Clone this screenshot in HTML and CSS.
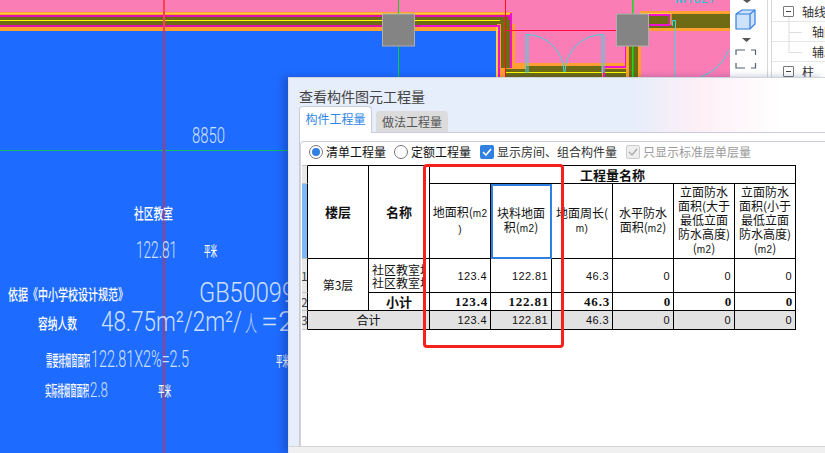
FILE: index.html
```html
<!DOCTYPE html>
<html lang="zh">
<head>
<meta charset="utf-8">
<title>查看构件图元工程量</title>
<link rel="stylesheet" href="styles.css">
</head>
<body>
<div class="app">
  <svg class="drawing" width="730" height="453" viewBox="0 0 730 453">
    <rect width="730" height="453" fill="#fa7db5"/>
    <rect y="30" width="498" height="423" fill="#1e6bff"/>
    <!-- top wall -->
    <rect y="12" width="512" height="19" fill="#ffa030"/>
    <rect y="13" width="510" height="1" fill="#ffd040"/>
    <rect y="15" width="512" height="12" fill="#e010b0"/>
    <rect y="17" width="508" height="8" fill="#6e6b14"/>
    <rect y="20" width="500" height="1" fill="#ffff00"/>
    <!-- right leg of the wall -->
    <rect x="497" y="24" width="18" height="53" fill="#ffa030"/>
    <rect x="501" y="20" width="10" height="48" fill="#6e6b14"/>
    <rect x="496" y="25" width="2" height="52" fill="#ffd040"/>
    <path d="M420 26H499V77" fill="none" stroke="#f010d0" stroke-width="2"/>
    <path d="M510 14H511V67H525V77" fill="none" stroke="#f010d0" stroke-width="2"/>
    <!-- bottom wall under doors -->
    <rect x="512" y="63" width="116" height="14" fill="#ffa030"/>
    <rect x="526" y="66" width="76" height="11" fill="#6e6b14"/>
    <rect x="505" y="69" width="21" height="8" fill="#6e6b14"/>
    <rect x="604" y="69" width="23" height="8" fill="#6e6b14"/>
    <rect x="505" y="72" width="125" height="1" fill="#ffff00"/>
    <path d="M604 77V67H626V46" fill="none" stroke="#f010d0" stroke-width="2"/>
    <rect x="627" y="46" width="13" height="31" fill="#6e6b14"/>
    <rect x="626" y="46" width="3" height="31" fill="#ffa030"/>
    <rect x="638" y="46" width="3" height="31" fill="#ffa030"/>
    <!-- right wall -->
    <rect x="640" y="11" width="90" height="20" fill="#ffa030"/>
    <rect x="640" y="14" width="90" height="14" fill="#6e6b14"/>
    <path d="M640 15H670V25H640" fill="none" stroke="#f010d0" stroke-width="2"/>
    <path d="M640 13.500H671V25" fill="none" stroke="#ffd040" stroke-width="1"/>
    <!-- doors -->
    <g fill="none" stroke="#40d8e0" stroke-width="1">
      <path d="M526 34.500V73M528 34.500V73M526 34.500A38 38 0 0 1 564 72"/>
      <path d="M602 34.500V73M604 34.500V73M603 34.500A38 38 0 0 0 565 72"/>
      <path d="M672.500 20.500H675.500V77M672.500 20.500V26"/>
      <path d="M729 50A50 50 0 0 1 701 77"/>
    </g>
    <text class="cyan-label" x="675" y="3" textLength="40" lengthAdjust="spacingAndGlyphs">M1021</text>
    <!-- axes -->
    <rect x="398" width="1" height="77" fill="#10d020"/>
    <rect x="632" width="1.500" height="77" fill="#10e020"/>
    <rect y="150" width="288" height="1" fill="#10c060"/>
    <rect x="505" width="1" height="77" fill="#ff1020"/>
    <rect x="505" y="30" width="112" height="1" fill="#ff1040"/>
    <rect x="163" y="0" width="2" height="31" fill="#ff4050"/>
    <rect x="163" y="31" width="2" height="422" fill="#a83c78"/>
    <!-- columns -->
    <rect class="column" x="382.500" y="14" width="32" height="32"/>
    <rect class="column" x="616.500" y="14" width="32" height="32"/>
    <!-- annotation text -->
    <text class="thin" font-size="22" x="192" y="143" textLength="33" lengthAdjust="spacingAndGlyphs">8850</text>
    <text class="note" font-size="15" x="134" y="219" textLength="39" lengthAdjust="spacingAndGlyphs">社区教室</text>
    <text class="thin" font-size="23" x="136" y="258" textLength="41" lengthAdjust="spacingAndGlyphs">122.81</text>
    <text class="note" font-size="14" x="204" y="256" textLength="13" lengthAdjust="spacingAndGlyphs">平米</text>
    <text class="note" font-size="15" x="8" y="300" textLength="120" lengthAdjust="spacingAndGlyphs">依据《中小学校设计规范》</text>
    <text class="thin" font-size="28" x="199" y="302" textLength="96" lengthAdjust="spacingAndGlyphs">GB50099</text>
    <text class="note" font-size="15" x="38" y="329" textLength="39" lengthAdjust="spacingAndGlyphs">容纳人数</text>
    <text class="thin" font-size="28" x="101" y="331" textLength="141" lengthAdjust="spacingAndGlyphs">48.75m²/2m²/</text>
    <text class="thin" font-size="22" x="245" y="331" textLength="12" lengthAdjust="spacingAndGlyphs">人</text>
    <text class="thin" font-size="28" x="261" y="331" textLength="34" lengthAdjust="spacingAndGlyphs">=2</text>
    <text class="note" font-size="15" x="46" y="366" textLength="44" lengthAdjust="spacingAndGlyphs">需要排烟窗面积</text>
    <text class="thin" font-size="23" x="91" y="367" textLength="98" lengthAdjust="spacingAndGlyphs">122.81X2%=2.5</text>
    <text class="note" font-size="14" x="276" y="366" textLength="13" lengthAdjust="spacingAndGlyphs">平米</text>
    <text class="note" font-size="15" x="45" y="396" textLength="44" lengthAdjust="spacingAndGlyphs">实际排烟窗面积</text>
    <text class="thin" font-size="20" x="90" y="397" textLength="18" lengthAdjust="spacingAndGlyphs">2.8</text>
    <text class="note" font-size="14" x="158" y="396" textLength="13" lengthAdjust="spacingAndGlyphs">平米</text>
  </svg>

  <div class="toolbar">
    <svg class="tool-svg" width="37" height="77" viewBox="0 0 37 77">
      <path d="M13 0H21L17 3Z" fill="#555"/>
      <path d="M6 14L12 10H25V24L20 29H6Z" fill="#cfe2fb" stroke="#2f80e0" stroke-width="1.200"/>
      <path d="M6 14H20V29M20 14L25 10" fill="none" stroke="#2f80e0" stroke-width="1.200"/>
      <path d="M12 38H21L16.500 42Z" fill="#555"/>
      <path d="M6 55V50H15M21 50H25.500V55M25.500 63V68H21M15 68H6V63" fill="none" stroke="#556070" stroke-width="1.200"/>
    </svg>
  </div>

  <div class="tree">
    <svg class="tree-lines" width="30" height="60" viewBox="0 0 30 60">
      <path d="M17 17V52.500H36M17 32.500H36" fill="none" stroke="#ddd"/>
    </svg>
    <div class="tree-row"><span class="minus"></span><span class="tree-label">轴线</span></div>
    <div class="tree-row tree-child"><span class="tree-label">轴网</span></div>
    <div class="tree-row tree-child"><span class="tree-label">辅助轴线</span></div>
    <div class="tree-row"><span class="minus"></span><span class="tree-label">柱</span></div>
  </div>
</div>

<section class="dialog">
  <h1 class="dialog-title">查看构件图元工程量</h1>
  <div class="tabs">
    <div class="tab tab-active">构件工程量</div>
    <div class="tab">做法工程量</div>
  </div>
  <div class="panel">
    <div class="inner">
      <div class="options">
        <label class="option opt-radio1"><span class="radio radio-on"></span>清单工程量</label>
        <label class="option opt-radio2"><span class="radio"></span>定额工程量</label>
        <label class="option opt-check1"><span class="check"><svg width="14" height="14" viewBox="0 0 14 14"><path d="M3 7L6 10L11 4" fill="none" stroke="#fff" stroke-width="1.600"/></svg></span>显示房间、组合构件量</label>
        <label class="option option-off"><span class="check check-off"><svg width="14" height="14" viewBox="0 0 14 14"><path d="M3 7L6 10L11 4" fill="none" stroke="#aaa" stroke-width="1.400"/></svg></span>只显示标准层单层量</label>
      </div>
      <table class="grid">
        <colgroup>
          <col class="c-head"><col class="c"><col class="c"><col class="c"><col class="c"><col class="c"><col class="c"><col class="c"><col class="c">
        </colgroup>
        <tbody>
          <tr class="r-top">
            <td class="rowhead"></td>
            <th rowspan="2" class="bold13">楼层</th>
            <th rowspan="2" class="bold13">名称</th>
            <th colspan="6" class="bold13">工程量名称</th>
          </tr>
          <tr class="r-head">
            <td class="rowhead rowhead-sel"></td>
            <th class="hd">地面积(<span class="lat">m2</span><br><span class="lat">)</span></th>
            <th class="hd sel">块料地面<br>积(<span class="lat">m2</span>)</th>
            <th class="hd">地面周长(<br><span class="lat">m)</span></th>
            <th class="hd">水平防水<br>面积(<span class="lat">m2</span>)</th>
            <th class="hd">立面防水<br>面积(大于<br>最低立面<br>防水高度)<br>(<span class="lat">m2</span>)</th>
            <th class="hd">立面防水<br>面积(小于<br>最低立面<br>防水高度)<br>(<span class="lat">m2</span>)</th>
          </tr>
          <tr class="r-data">
            <td class="rowhead">1</td>
            <td rowspan="2" class="center">第3层</td>
            <td class="name"><div class="clip">社区教室地面<br>社区教室块料</div></td>
            <td class="num">123.4</td><td class="num">122.81</td><td class="num">46.3</td><td class="num">0</td><td class="num">0</td><td class="num">0</td>
          </tr>
          <tr class="r-sub">
            <td class="rowhead">2</td>
            <td class="center bold13">小计</td>
            <td class="num b">123.4</td><td class="num b">122.81</td><td class="num b">46.3</td><td class="num b">0</td><td class="num b">0</td><td class="num b">0</td>
          </tr>
          <tr class="r-total">
            <td class="rowhead">3</td>
            <td colspan="2" class="center">合计</td>
            <td class="num">123.4</td><td class="num">122.81</td><td class="num">46.3</td><td class="num">0</td><td class="num">0</td><td class="num">0</td>
          </tr>
        </tbody>
      </table>
    </div>
  </div>
  <div class="dialog-foot"></div>
</section>
<div class="redmark"></div>
</body>
</html>
```

FILE: styles.css
```css
* { box-sizing: border-box; }
html, body { margin: 0; padding: 0; }
body {
  width: 825px;
  height: 453px;
  overflow: hidden;
  position: relative;
  background: #fff;
  font-family: "Noto Sans CJK SC", "Noto Sans", sans-serif;
  color: #111;
}
.app { display: flex; width: 825px; height: 453px; }
.drawing { display: block; flex: 0 0 730px; }
.thin {
  font-family: "Roboto", "Noto Sans CJK SC", sans-serif;
  font-weight: 300;
  fill: #cfe0ff;
}
.note {
  font-family: "Noto Sans CJK SC", sans-serif;
  font-weight: 500;
  fill: #fff;
}
.cyan-label { font-family: "Roboto", sans-serif; font-size: 13px; fill: #20c8d8; }
.column { fill: #848484; stroke: #aeaeae; stroke-width: 1; }

.toolbar { flex: 0 0 37px; background: #fff; border-right: 1px solid #d8d8d8; }
.tool-svg { display: block; }
.tree { flex: 1; position: relative; border-left: 1px solid #d8d8d8; margin-left: 3px; font-size: 12px; padding-top: 2px; }
.tree-lines { position: absolute; left: 0; top: 0; }
.tree-row { display: flex; align-items: center; height: 20px; padding-left: 11px; border-bottom: 1px solid #e6e6e6; }
.tree-child { padding-left: 40px; }
.tree-label { white-space: nowrap; color: #333; }
.minus {
  width: 11px; height: 11px; margin-right: 8px;
  border: 1px solid #777; border-radius: 1px; background: #fff;
  display: flex; align-items: center; justify-content: center;
  position: relative;
}
.minus::after { content: ""; width: 5px; height: 1px; background: #444; }

.dialog {
  position: absolute;
  left: 288px; top: 77px; right: 0; bottom: 0;
  padding: 9px 0 0 10px;
  display: flex;
  flex-direction: column;
  border-top: 1px solid #cfd3dc;
  border-left: 1px solid #dbe0ec;
  background: linear-gradient(90deg, #e6edfb 0%, #e6eefb 64%, #fdeff6 76%, #ffffff 92%);
  box-shadow: -5px 0 7px rgba(10, 30, 90, .28);
}
.dialog-title { margin: 0; font-size: 14px; line-height: 18px; font-weight: 400; color: #444; }
.tabs { display: flex; gap: 4px; align-items: flex-end; height: 27px; position: relative; z-index: 1; }
.tab {
  width: 72px; height: 21px;
  font-size: 12px; line-height: 21px; text-align: center;
  color: #555; background: #dcdcdc;
  border-radius: 4px 4px 0 0;
}
.tab-active {
  width: 73px;
  height: 27px; line-height: 24px; margin-bottom: -1px;
  color: #2f86e6; background: #fff;
  border: 1px solid #c9ccd6; border-bottom: 0;
}
.panel {
  flex: 1;
  background: #fff;
  border-top: 1px solid #c9ccd6;
  border-left: 1px solid #c9ccd6;
  padding: 8px 0 0 0;
  min-height: 0;
}
.inner {
  height: 100%;
  border-top: 1px solid #c9ccd6;
  border-left: 1px solid #d4d4d8;
  border-top-left-radius: 4px;
}
.options { display: flex; align-items: center; height: 23px; font-size: 12px; padding: 0 0 4px 8px; }
.option { display: flex; align-items: center; white-space: nowrap; color: #111; }
.opt-radio1 { width: 85px; }
.opt-radio2 { width: 86px; }
.opt-check1 { width: 146px; color: #333; }
.option-off { color: #9a9a9a; }
.radio { width: 14px; height: 14px; margin-right: 3px; border-radius: 50%; border: 1px solid #777; background: #fff; position: relative; flex: none; }
.radio-on::after { content: ""; position: absolute; left: 2px; top: 2px; width: 8px; height: 8px; border-radius: 50%; background: #2f80e0; }
.check { width: 14px; height: 14px; margin-right: 3px; border-radius: 2px; background: #2f80e0; flex: none; display: block; }
.check svg { display: block; }
.check-off { background: #eee; border: 1px solid #ccc; }
.check-off svg { margin: -1px; }

.grid {
  table-layout: fixed;
  border-collapse: separate;
  border-spacing: 0;
  width: 494px;
  margin-left: 1px;
  font-size: 12px;
  line-height: 14px;
  color: #111;
}
.c-head { width: 6px; }
.c { width: 61px; }
.grid th, .grid td {
  padding: 0;
  border-right: 1px solid #000;
  border-bottom: 1px solid #000;
  overflow: hidden;
}
.r-top th { border-top: 1px solid #000; }
.r-top { height: 19px; }
.r-head { height: 75px; }
.r-data { height: 34px; }
.r-sub { height: 18px; }
.r-total { height: 19px; }
.grid th { font-weight: 400; text-align: center; }
.grid th.bold13, .grid td.bold13 { font-weight: 700; font-size: 13px; }
.hd { line-height: 14px; }
.lat { font-family: "Liberation Sans", sans-serif; font-size: 10px; letter-spacing: .3px; }
.grid .rowhead {
  background: #e8e8e8;
  border-right: 1px solid #000;
  border-bottom: 1px solid #c4c4c4;
  font-size: 12px;
  text-align: left;
  color: #444;
  white-space: nowrap;
  text-indent: -1px;
}
.r-top .rowhead { border-top: 1px solid #c4c4c4; }
.grid .rowhead-sel { background: #7fb8f8; }
.grid .sel { outline: 2px solid #2f80e0; outline-offset: -2px; }
.center { text-align: center; }
.num {
  text-align: right;
  font-family: "Liberation Sans", sans-serif;
  font-size: 11px;
  letter-spacing: .4px;
  padding-right: 3px !important;
}
.num.b { font-family: "Liberation Serif", serif; font-weight: 700; font-size: 13px; letter-spacing: .8px; padding-right: 2px !important; }
.name { padding-left: 3px !important; line-height: 13px; }
.clip { width: 53px; overflow: hidden; white-space: nowrap; line-height: 13px; }
.r-total td { background: #e2e2e2; }

.dialog-foot { flex: 0 0 7px; margin-left: -10px; background: #f0f0f0; border-top: 1px solid #d4d4d4; }
.redmark {
  position: absolute;
  left: 423px; top: 164px;
  width: 141px; height: 184px;
  border: 3px solid #f6201c;
  border-radius: 4px;
}
```
